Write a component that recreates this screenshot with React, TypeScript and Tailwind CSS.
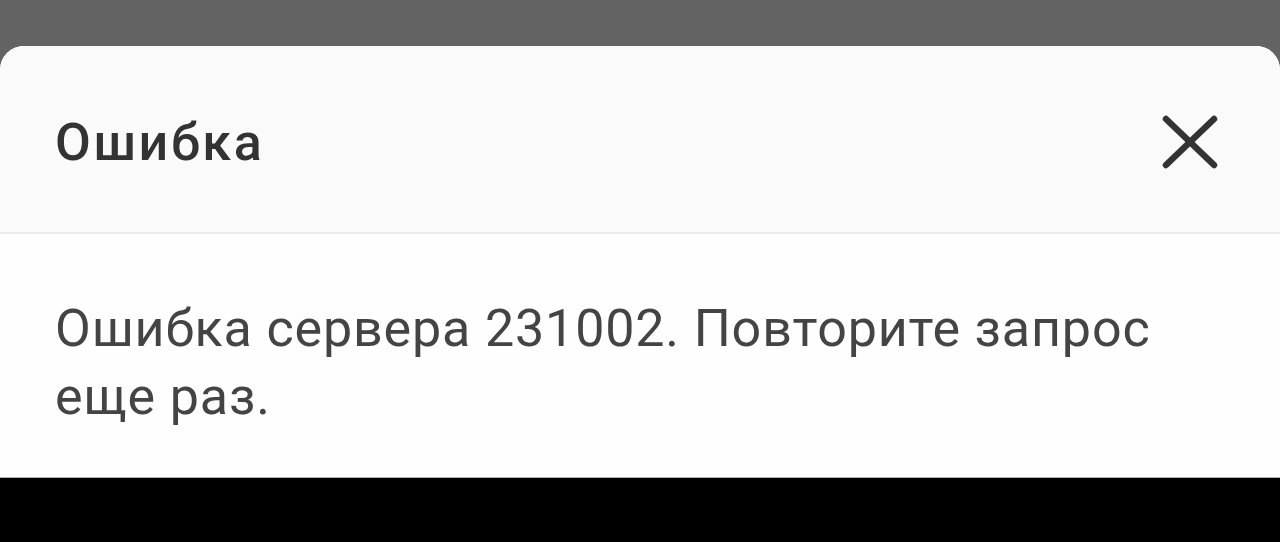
export default function App() {
  return (
    <div className="flex h-[542px] w-[1280px] flex-col overflow-hidden bg-black font-['Roboto',sans-serif]">
      {/* dimmed backdrop */}
      <div className="h-[46px] shrink-0 bg-[#636363]" />
      {/* bottom sheet */}
      <div className="flex flex-col bg-[#636363]">
        <div className="flex flex-col overflow-hidden rounded-t-[24px] bg-white">
          <div className="flex h-[188px] items-center justify-between border-b-2 border-[#ebebeb] bg-[#fafafa] pl-[55px] pr-[62px] pt-[6px]">
            <h1 className="pt-[2px] text-[52px] font-medium tracking-[2.6px] text-[#333333]">Ошибка</h1>
            <button className="text-[#333333]">
              <svg width="56" height="54" viewBox="0 0 56 54" fill="none" stroke="currentColor" strokeWidth="6.5" strokeLinecap="round">
                <path d="M4 4 L52 50" />
                <path d="M52 4 L4 50" />
              </svg>
            </button>
          </div>
          <div className="h-[243px] bg-[#fefefe] px-[55px] pt-[61px]">
            <p className="text-[52px] leading-[68px] tracking-[0.85px] text-[#444444]">
              Ошибка сервера 231002. Повторите запрос
              <br />
              еще раз.
            </p>
          </div>
        </div>
      </div>
      <div className="flex-1 border-t border-[#b0b0b0] bg-black" />
    </div>
  );
}
